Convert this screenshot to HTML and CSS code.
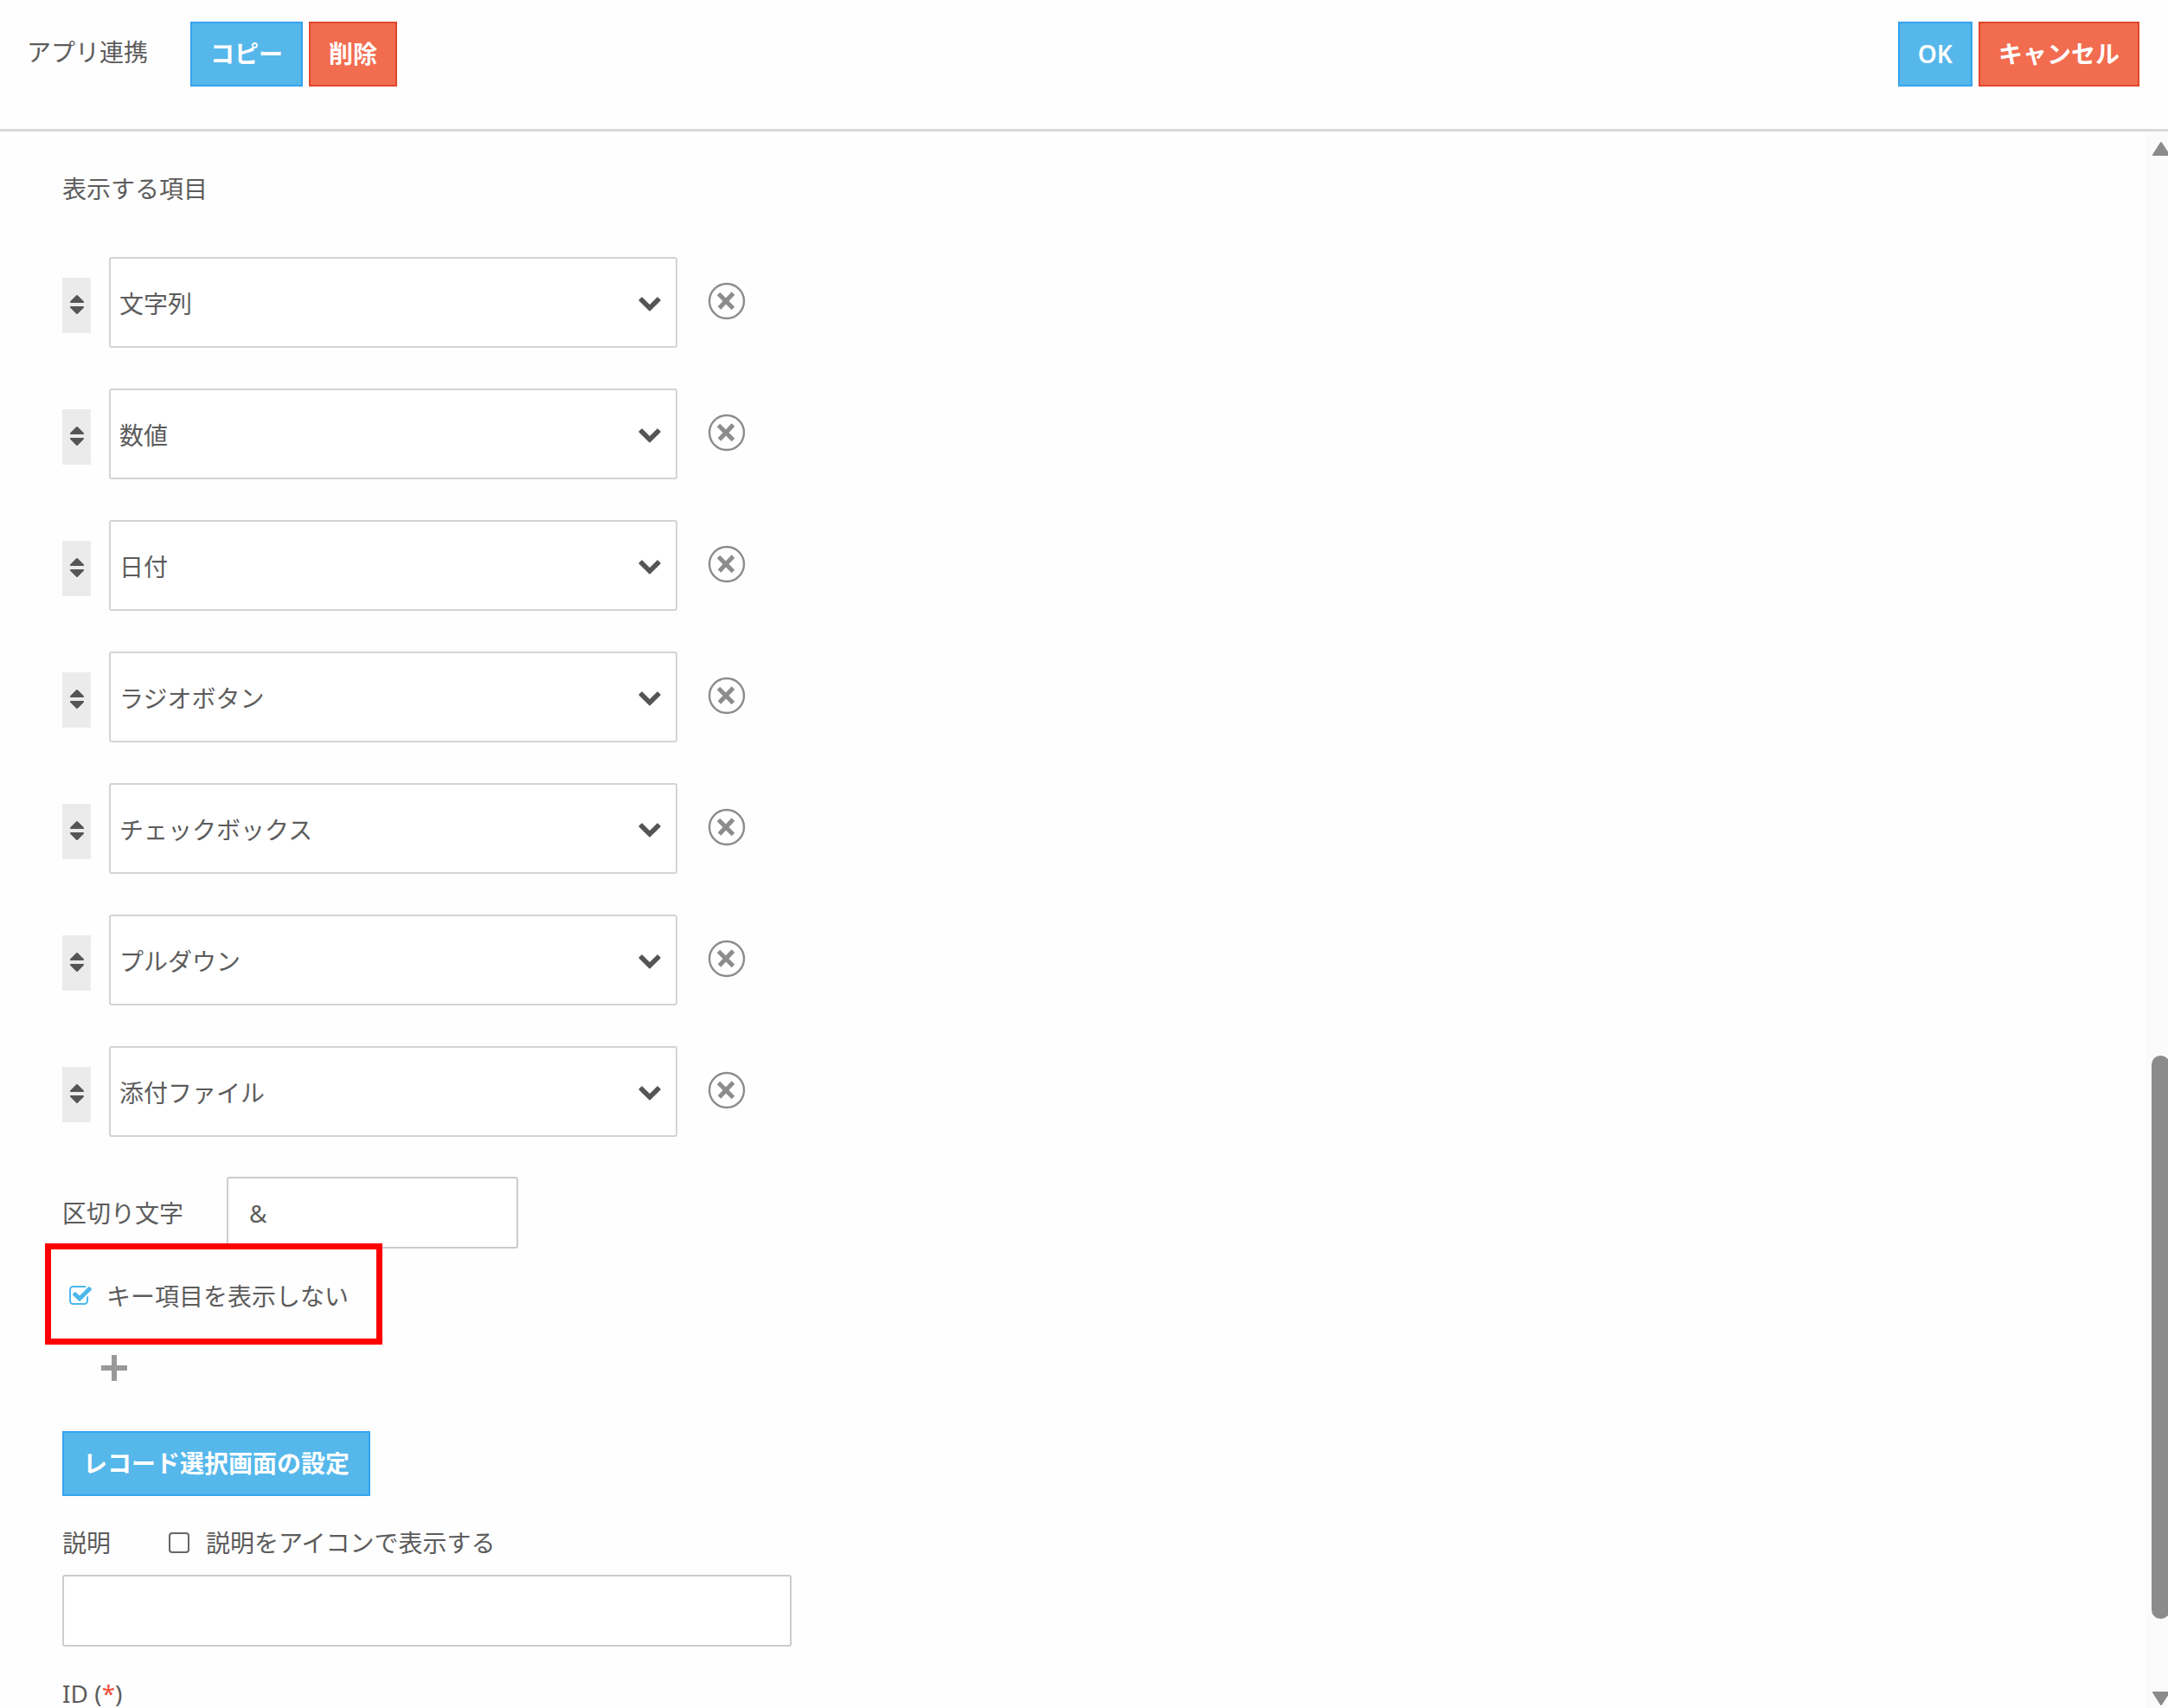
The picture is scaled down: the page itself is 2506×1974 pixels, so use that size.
FILE: index.html
```
<!DOCTYPE html>
<html lang="ja">
<head>
    <meta charset="UTF-8">
    <title>アプリ連携</title>
    <link rel="stylesheet" href="styles.css">
</head>
<body>
<!-- アイコン定義 -->
<svg class="defs" width="0" height="0" aria-hidden="true">
    <symbol id="sort" viewBox="0 0 1792 1792">
        <path d="M1408 1088q0 26-19 45l-448 448q-19 19-45 19t-45-19l-448-448q-19-19-19-45t19-45 45-19h896q26 0 45 19t19 45zm0-384q0 26-19 45t-45 19h-896q-26 0-45-19t-19-45 19-45l448-448q19-19 45-19t45 19l448 448q19 19 19 45z"/>
    </symbol>
    <symbol id="down" viewBox="0 0 1792 1792">
        <path d="M1683 808l-742 741q-19 19-45 19t-45-19l-742-741q-19-19-19-45.5t19-45.5l166-165q19-19 45-19t45 19l531 531 531-531q19-19 45-19t45 19l166 165q19 19 19 45.5t-19 45.5z"/>
    </symbol>
    <symbol id="close" viewBox="0 0 44 44">
        <circle cx="22" cy="22" r="20" fill="none" stroke="#8c8c8c" stroke-width="2.4"/>
        <path d="M12.500 13.500l17 17M29.500 13L13.500 30" fill="none" stroke="#8c8c8c" stroke-width="5"/>
    </symbol>
    <symbol id="check" viewBox="0 0 1792 1792">
        <path d="M1472 930v318q0 119-84.5 203.5t-203.5 84.5h-832q-119 0-203.5-84.5t-84.5-203.5v-832q0-119 84.5-203.5t203.5-84.5h832q63 0 117 25 15 7 18 23 3 17-9 29l-49 49q-10 10-23 10-3 0-9-2-23-6-45-6h-832q-66 0-113 47t-47 113v832q0 66 47 113t113 47h832q66 0 113-47t47-113v-254q0-13 9-22l64-64q10-10 23-10 6 0 12 3 20 8 20 29zm231-489l-814 814q-24 24-57 24t-57-24l-430-430q-24-24-24-57t24-57l110-110q24-24 57-24t57 24l263 263 647-647q24-24 57-24t57 24l110 110q24 24 24 57t-24 57z"/>
    </symbol>
</svg>

<header class="header">
    <h1>アプリ連携</h1>
    <button type="button" class="btn blue">コピー</button>
    <button type="button" class="btn red">削除</button>
    <div class="right">
        <button type="button" class="btn blue">OK</button>
        <button type="button" class="btn red">キャンセル</button>
    </div>
</header>

<div class="wrap">
    <main class="main">
        <h2>表示する項目</h2>
        <!-- 項目リスト -->
        <ul class="items">
            <li>
                <span class="handle"><svg><use href="#sort"/></svg></span>
                <div class="select"><select aria-label="項目1"><option>文字列</option></select><svg><use href="#down"/></svg></div>
                <button type="button" class="close" aria-label="削除"><svg><use href="#close"/></svg></button>
            </li>
            <li>
                <span class="handle"><svg><use href="#sort"/></svg></span>
                <div class="select"><select aria-label="項目2"><option>数値</option></select><svg><use href="#down"/></svg></div>
                <button type="button" class="close" aria-label="削除"><svg><use href="#close"/></svg></button>
            </li>
            <li>
                <span class="handle"><svg><use href="#sort"/></svg></span>
                <div class="select"><select aria-label="項目3"><option>日付</option></select><svg><use href="#down"/></svg></div>
                <button type="button" class="close" aria-label="削除"><svg><use href="#close"/></svg></button>
            </li>
            <li>
                <span class="handle"><svg><use href="#sort"/></svg></span>
                <div class="select"><select aria-label="項目4"><option>ラジオボタン</option></select><svg><use href="#down"/></svg></div>
                <button type="button" class="close" aria-label="削除"><svg><use href="#close"/></svg></button>
            </li>
            <li>
                <span class="handle"><svg><use href="#sort"/></svg></span>
                <div class="select"><select aria-label="項目5"><option>チェックボックス</option></select><svg><use href="#down"/></svg></div>
                <button type="button" class="close" aria-label="削除"><svg><use href="#close"/></svg></button>
            </li>
            <li>
                <span class="handle"><svg><use href="#sort"/></svg></span>
                <div class="select"><select aria-label="項目6"><option>プルダウン</option></select><svg><use href="#down"/></svg></div>
                <button type="button" class="close" aria-label="削除"><svg><use href="#close"/></svg></button>
            </li>
            <li>
                <span class="handle"><svg><use href="#sort"/></svg></span>
                <div class="select"><select aria-label="項目7"><option>添付ファイル</option></select><svg><use href="#down"/></svg></div>
                <button type="button" class="close" aria-label="削除"><svg><use href="#close"/></svg></button>
            </li>
        </ul>

        <div class="separator">
            <label for="sep">区切り文字</label>
            <input type="text" id="sep" class="text" value="&amp;">
        </div>

        <div class="hide-key">
            <span class="checkbox"><input type="checkbox" id="hidekey" checked><svg><use href="#check"/></svg></span>
            <label for="hidekey">キー項目を表示しない</label>
        </div>

        <button type="button" class="add" aria-label="追加">
            <svg viewBox="0 0 32 32"><path d="M16 1v30M1 16h30" stroke="#999" stroke-width="6"/></svg>
        </button>

        <button type="button" class="btn blue setting">レコード選択画面の設定</button>

        <div class="desc">
            <label for="desc">説明</label>
            <span class="checkbox"><input type="checkbox" id="icon"><svg><use href="#check"/></svg></span>
            <label for="icon">説明をアイコンで表示する</label>
        </div>
        <input type="text" id="desc" class="text long">

        <p class="id">ID (<em>*</em>)</p>
    </main>

    <!-- スクロールバー -->
    <div class="scroll" aria-hidden="true">
        <svg viewBox="0 0 22 18"><path d="M11 2L20 16H2z"/></svg>
        <div class="thumb"></div>
        <svg viewBox="0 0 22 18"><path d="M11 16L20 2H2z"/></svg>
    </div>
</div>
</body>
</html>
```

FILE: styles.css
```
* {
    margin: 0;
    padding: 0;
    box-sizing: border-box;
}
body {
    height: 100vh;
    display: flex;
    flex-direction: column;
    overflow: hidden;
    background: #fefefe;
    color: #5c5c5c;
    font: 28px/40px "Noto Sans", "Noto Sans CJK JP", sans-serif;
}
h1, h2 {
    font-size: 28px;
    font-weight: normal;
}
button, input, select {
    font: inherit;
    color: inherit;
}
button {
    cursor: pointer;
}
svg {
    display: block;
    fill: #555;
}
.defs {
    position: absolute;
}
/*ヘッダー*/
.header {
    flex: none;
    display: flex;
    align-items: center;
    gap: 7px;
    padding: 25px 33px 49px 31px;
    border-bottom: 3px solid #d8d8d8;
}
.header h1 {
    margin: 0 42px 6px 0;
}
.right {
    display: flex;
    gap: 7px;
    margin-left: auto;
}
.btn {
    height: 75px;
    padding: 0 21px 2px;
    border: 2px solid;
    color: #fff;
    font-weight: 600;
}
.blue {
    background: #55b7ea;
    border-color: #36a3f0;
}
.red {
    background: #f26c4f;
    border-color: #e0482c;
}
/*本体*/
.wrap {
    flex: 1;
    min-height: 0;
    display: flex;
}
.main {
    flex: 1;
    padding: 46px 72px 0;
    overflow: hidden;
}
.items {
    display: flex;
    flex-direction: column;
    gap: 47px;
    margin-top: 59px;
    list-style: none;
}
.items li {
    display: flex;
    align-items: center;
}
.handle {
    display: flex;
    align-items: center;
    justify-content: center;
    width: 33px;
    height: 64px;
    margin-top: 6px;
    padding-bottom: 2px;
    background: #ebebeb;
}
.handle svg,
.select svg,
.checkbox svg {
    width: 28px;
    height: 28px;
}
.select {
    position: relative;
    width: 657px;
    margin: 0 35px 0 21px;
}
.select select {
    display: block;
    width: 100%;
    height: 105px;
    padding: 2px 50px 0 10px;
    border: 2px solid #d4d4d4;
    border-radius: 3px;
    background: #fff;
    appearance: none;
}
.select svg {
    position: absolute;
    right: 18px;
    top: 38px;
    pointer-events: none;
}
.close {
    margin-bottom: 4px;
    border: 0;
    background: none;
}
.close svg {
    width: 44px;
    height: 44px;
}
.text {
    display: block;
    width: 337px;
    height: 83px;
    padding: 0 24px;
    border: 2px solid #ccc;
    border-radius: 3px;
    background: #fff;
}
.separator {
    display: flex;
    align-items: center;
    gap: 50px;
    margin-top: 46px;
}
/*チェックボックス*/
.checkbox {
    display: grid;
    place-items: center;
    width: 28px;
    height: 28px;
}
.checkbox input,
.checkbox svg {
    grid-area: 1 / 1;
}
.checkbox input {
    width: 24px;
    height: 24px;
    border: 2px solid #666;
    border-radius: 4px;
    appearance: none;
}
.checkbox svg {
    display: none;
    fill: #4db8ec;
    pointer-events: none;
}
.checkbox input:checked {
    border-color: transparent;
}
.checkbox input:checked + svg {
    display: block;
}
.hide-key {
    position: relative;
    display: flex;
    align-items: center;
    gap: 16px;
    width: fit-content;
    margin-top: 35px;
    padding-left: 7px;
}
/*赤枠*/
.hide-key::after {
    content: "";
    position: absolute;
    top: -41px;
    right: -39px;
    bottom: -36px;
    left: -20px;
    border: 7px solid #f00;
    pointer-events: none;
}
.add {
    display: block;
    margin: 47px 0 57px 44px;
    border: 0;
    background: none;
}
.add svg {
    width: 32px;
    height: 32px;
}
.setting {
    display: block;
    padding: 0 22px 2px;
}
.desc {
    display: flex;
    align-items: center;
    margin: 34px 0 17px;
}
.desc .checkbox {
    margin: 0 17px 0 65px;
}
.long {
    width: 843px;
}
.id {
    margin-top: 39px;
    line-height: 30px;
}
.id em {
    color: #f0503c;
    font-style: normal;
}
/*スクロールバー*/
.scroll {
    flex: none;
    display: flex;
    flex-direction: column;
    width: 26px;
    padding: 11px 0 2px 7px;
    background: #fbfbfb;
    overflow: hidden;
}
.scroll svg {
    flex: none;
    width: 22px;
    height: 18px;
    fill: #8b8b8b;
    stroke: #8b8b8b;
    stroke-width: 2;
    stroke-linejoin: round;
}
.thumb {
    flex: none;
    width: 21px;
    height: 36%;
    min-height: 40px;
    margin: auto 0 83px;
    border-radius: 11px;
    background: #8b8b8b;
}
```
